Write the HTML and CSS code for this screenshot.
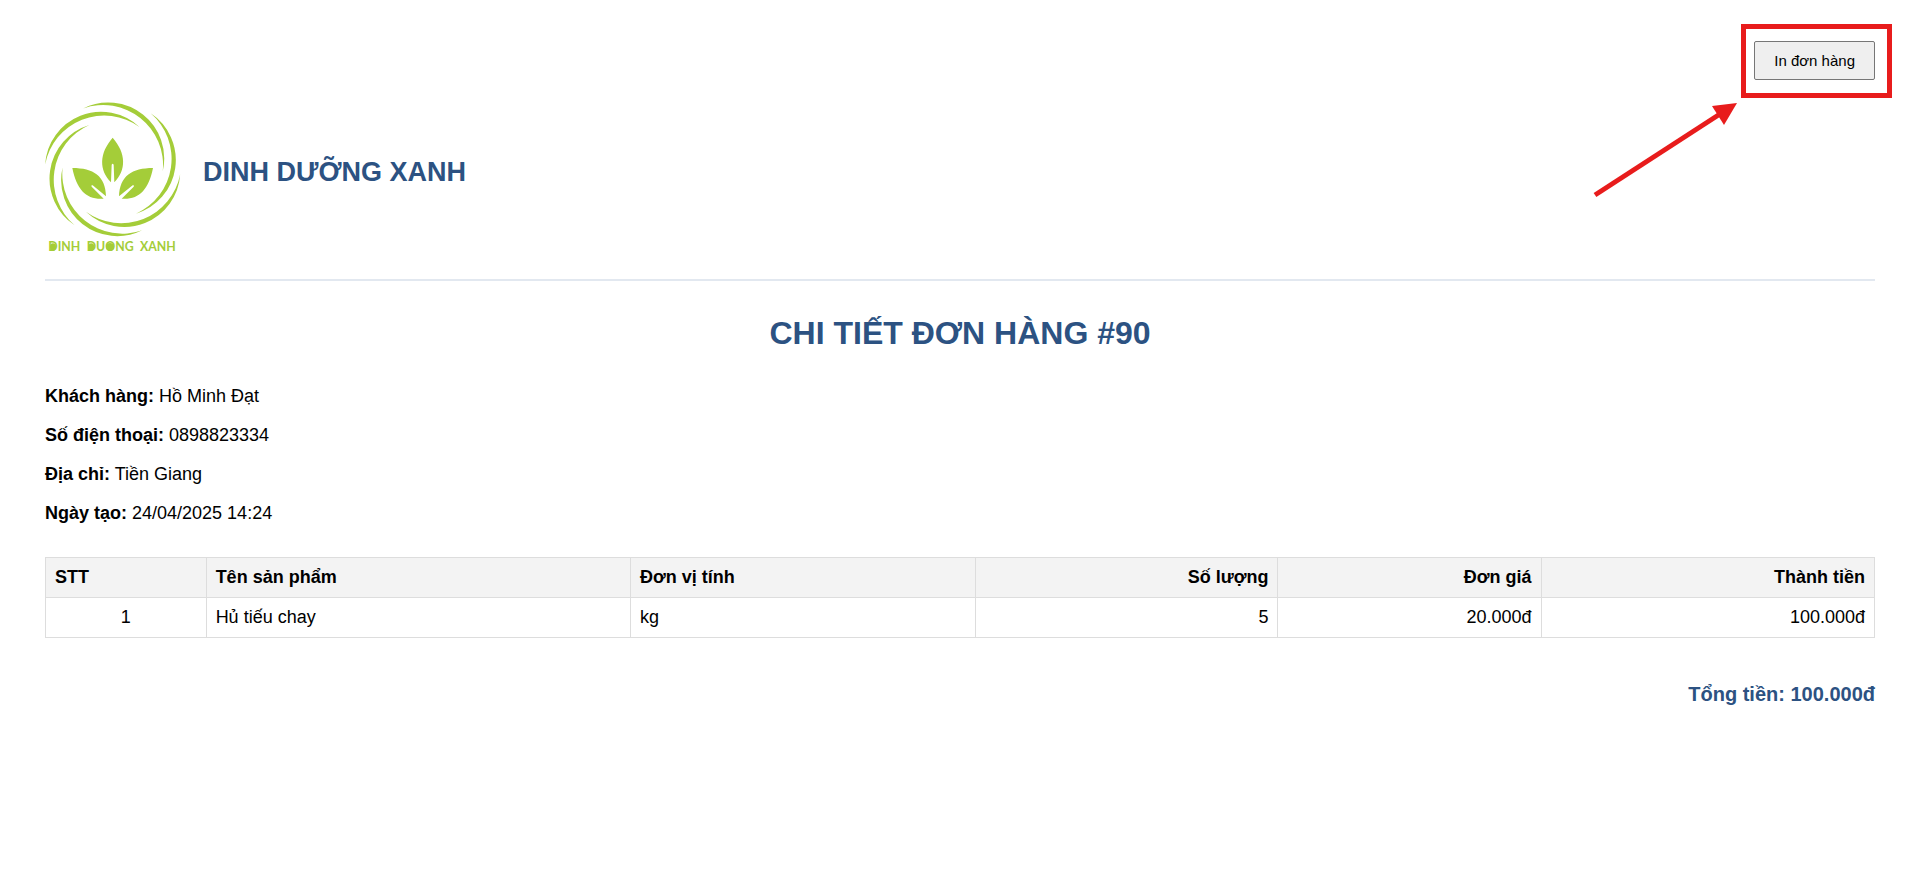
FILE: index.html
```
<!DOCTYPE html>
<html lang="vi">
<head>
    <meta charset="UTF-8">
    <meta name="viewport" content="width=device-width, initial-scale=1.0">
    <title>Chi tiết đơn hàng #90</title>
    <link rel="stylesheet" href="styles.css">
</head>
<body>

    <!-- Print button -->
    <div class="toolbar">
        <div class="print-wrap">
            <button type="button" class="print-btn" onclick="window.print()">In đơn hàng</button>
            <div class="highlight"></div>
            <svg class="arrow" viewBox="0 0 150 100" aria-hidden="true">
                <path d="M4 95 L129 14" stroke="#e81c1c" stroke-width="5" fill="none"/>
                <path d="M146 3 L121 6 L133 25 Z" fill="#e81c1c"/>
            </svg>
        </div>
    </div>

    <!-- Company header -->
    <header class="header">
        <svg class="logo" viewBox="45 -9 408 510" role="img" aria-label="Dinh Duong Xanh">
            <defs>
                <path id="swirl" d="M362 70 A168 168 0 0 1 318 371 A180 180 0 0 0 362 70 Z"/>
            </defs>
            <g fill="#a4cd39">
                <use href="#swirl"/>
                <use href="#swirl" transform="rotate(60 248 238)"/>
                <use href="#swirl" transform="rotate(120 248 238)"/>
                <use href="#swirl" transform="rotate(180 248 238)"/>
                <use href="#swirl" transform="rotate(240 248 238)"/>
                <use href="#swirl" transform="rotate(300 248 238)"/>
                <path d="M248 143 C289 190 289 240 253 277 L251 224 Q248 218 245 224 L243 277 C207 240 207 190 248 143 Z"/>
                <path d="M127 234 C190 234 227 258 228 319 L188 286 Q182 284 185 290 L221 326 C170 330 140 300 127 234 Z"/>
                <path d="M369 234 C306 234 269 258 267 319 L308 286 Q314 284 311 290 L275 326 C326 330 356 300 369 234 Z"/>
                <text class="logo-text" y="484"><tspan x="55">DINH</tspan><tspan x="170">DUONG</tspan><tspan x="330">XANH</tspan></text>
                <!-- filled counters of D and O -->
                <ellipse cx="69" cy="471" rx="9" ry="11"/>
                <ellipse cx="184" cy="471" rx="9" ry="11"/>
                <ellipse cx="240" cy="471" rx="12" ry="12"/>
            </g>
        </svg>
        <h2 class="company">DINH DƯỠNG XANH</h2>
    </header>

    <h1 class="title">CHI TIẾT ĐƠN HÀNG #90</h1>

    <!-- Customer info -->
    <div class="info">
        <p><strong>Khách hàng:</strong> Hồ Minh Đạt</p>
        <p><strong>Số điện thoại:</strong> 0898823334</p>
        <p><strong>Địa chỉ:</strong> Tiền Giang</p>
        <p><strong>Ngày tạo:</strong> 24/04/2025 14:24</p>
    </div>

    <!-- Order items -->
    <table>
        <thead>
            <tr>
                <th>STT</th>
                <th>Tên sản phẩm</th>
                <th>Đơn vị tính</th>
                <th class="right">Số lượng</th>
                <th class="right">Đơn giá</th>
                <th class="right">Thành tiền</th>
            </tr>
        </thead>
        <tbody>
            <tr>
                <td class="center">1</td>
                <td>Hủ tiếu chay</td>
                <td>kg</td>
                <td class="right">5</td>
                <td class="right">20.000đ</td>
                <td class="right">100.000đ</td>
            </tr>
        </tbody>
    </table>

    <p class="total">Tổng tiền: 100.000đ</p>

</body>
</html>
```
FILE: styles.css
```
body {
    font-family: Arial, "Liberation Sans", sans-serif;
    font-size: 18px;
    line-height: 21px;
    color: #000;
    background-color: #fff;
    margin: 0;
    padding: 41px 43px 41px 45px;
}

.toolbar {
    display: flex;
    justify-content: flex-end;
}

.print-wrap {
    position: relative;
}

.print-btn {
    display: block;
    font-family: inherit;
    font-size: 15px;
    line-height: 17px;
    padding: 10px 19px;
    color: #000;
    background-color: #efefef;
    border: 1px solid #767676;
    border-radius: 2px;
    cursor: pointer;
}

/* Red frame and arrow over the print button */
.highlight {
    position: absolute;
    inset: -17px -17px -18px -13px;
    border: 5px solid #e81c1c;
    pointer-events: none;
}

.arrow {
    position: absolute;
    top: 59px;
    right: 134px;
    width: 150px;
    height: 100px;
    pointer-events: none;
}

.header {
    display: flex;
    align-items: center;
    gap: 22px;
    margin-top: 7px;
    padding-bottom: 22px;
    border-bottom: 2px solid #e2e8f0;
}

.logo {
    width: 136px;
    height: 170px;
}

.logo-text {
    font-family: Lato, "Liberation Sans", sans-serif;
    font-size: 37px;
    font-weight: bold;
}

.company {
    font-size: 27px;
    line-height: 32px;
    color: #2c5282;
    margin: 0;
}

.title {
    font-size: 32px;
    line-height: 36px;
    text-align: center;
    color: #2c5282;
    margin: 34px 0 35px;
}

.info p {
    margin: 18px 0;
}

table {
    width: 100%;
    border-collapse: collapse;
    margin-top: 33px;
}

th, td {
    border: 1px solid #ddd;
    padding: 9px;
    text-align: left;
}

th {
    background-color: #f3f3f3;
}

.right {
    text-align: right;
}

.center {
    text-align: center;
}

.total {
    font-size: 20px;
    line-height: 24px;
    font-weight: bold;
    text-align: right;
    color: #2c5282;
    margin: 44px 0 0;
}
```
